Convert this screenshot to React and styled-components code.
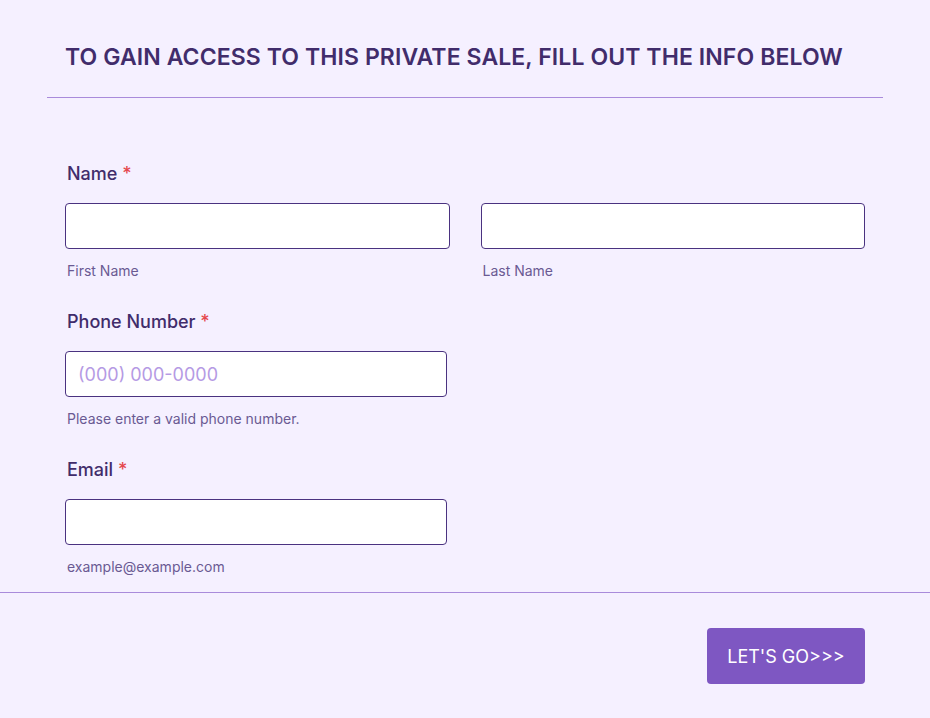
import React from 'react';
import styled, { createGlobalStyle } from 'styled-components';

const GlobalStyle = createGlobalStyle`
  html, body {
    margin: 0;
    padding: 0;
    background: #f5f0ff;
  }
  * {
    box-sizing: border-box;
  }
`;

const App = () => {
  return (
    <>
      <GlobalStyle />
      <Page>
        <Header>
          <Title>TO GAIN ACCESS TO THIS PRIVATE SALE, FILL OUT THE INFO BELOW</Title>
        </Header>

        <Form>
          <Field>
            <Label>
              Name <Required>*</Required>
            </Label>
            <Row>
              <Column>
                <Input type="text" />
                <SubLabel>First Name</SubLabel>
              </Column>
              <Column>
                <Input type="text" />
                <SubLabel>Last Name</SubLabel>
              </Column>
            </Row>
          </Field>

          <Field>
            <Label>
              Phone Number <Required>*</Required>
            </Label>
            <Input type="tel" placeholder="(000) 000-0000" $width="382px" />
            <SubLabel>Please enter a valid phone number.</SubLabel>
          </Field>

          <Field>
            <Label>
              Email <Required>*</Required>
            </Label>
            <Input type="email" $width="382px" />
            <SubLabel>example@example.com</SubLabel>
          </Field>
        </Form>

        <Footer>
          <Button type="button">LET'S GO&gt;&gt;&gt;</Button>
        </Footer>
      </Page>
    </>
  );
};

const Page = styled.div`
  min-height: 100vh;
  width: 100%;
  background: #f5f0ff;
  font-family: Inter, 'Noto Sans', sans-serif;
  color: #412c6b;
`;

const Header = styled.div`
  margin: 0 47px;
  padding: 43px 18px 26px;
  border-bottom: 1px solid #a98bdb;
`;

const Title = styled.h1`
  margin: 0;
  font-size: 23px;
  line-height: 28px;
  font-weight: 600;
  letter-spacing: 0.1px;
  color: #412c6b;
`;

const Form = styled.div`
  padding: 64px 65px 16px;
  display: flex;
  flex-direction: column;
  gap: 30px;
`;

const Field = styled.div`
  display: flex;
  flex-direction: column;
`;

const Label = styled.div`
  font-size: 18px;
  line-height: 22px;
  font-weight: 500;
  color: #412c6b;
  padding: 1px 0 0 2px;
  margin-bottom: 18px;
`;

const Required = styled.span`
  color: #e5484d;
`;

const Row = styled.div`
  display: grid;
  grid-template-columns: 1fr 1fr;
  column-gap: 31px;
`;

const Column = styled.div`
  display: flex;
  flex-direction: column;
`;

const Input = styled.input`
  width: ${(p) => p.$width || '100%'};
  height: 46px;
  border: 1px solid #4a3280;
  border-radius: 4px;
  background: #ffffff;
  padding: 0 12px;
  font-family: Inter, 'Noto Sans', sans-serif;
  font-size: 18px;
  color: #412c6b;
  outline: none;

  &::placeholder {
    color: #b59ae4;
  }
`;

const SubLabel = styled.div`
  margin-top: 13px;
  padding-left: 2px;
  font-size: 14px;
  line-height: 18px;
  color: #6a5a93;
`;

const Footer = styled.div`
  border-top: 1px solid #a98bdb;
  padding: 35px 65px 34px;
  display: flex;
  justify-content: flex-end;
`;

const Button = styled.button`
  width: 158px;
  height: 56px;
  background: #7e57c2;
  color: #ffffff;
  border: none;
  border-radius: 4px;
  font-family: Inter, 'Noto Sans', sans-serif;
  font-size: 18px;
  font-weight: 400;
  cursor: pointer;

  &:hover {
    background: #6f48b3;
  }
`;

export default App;
